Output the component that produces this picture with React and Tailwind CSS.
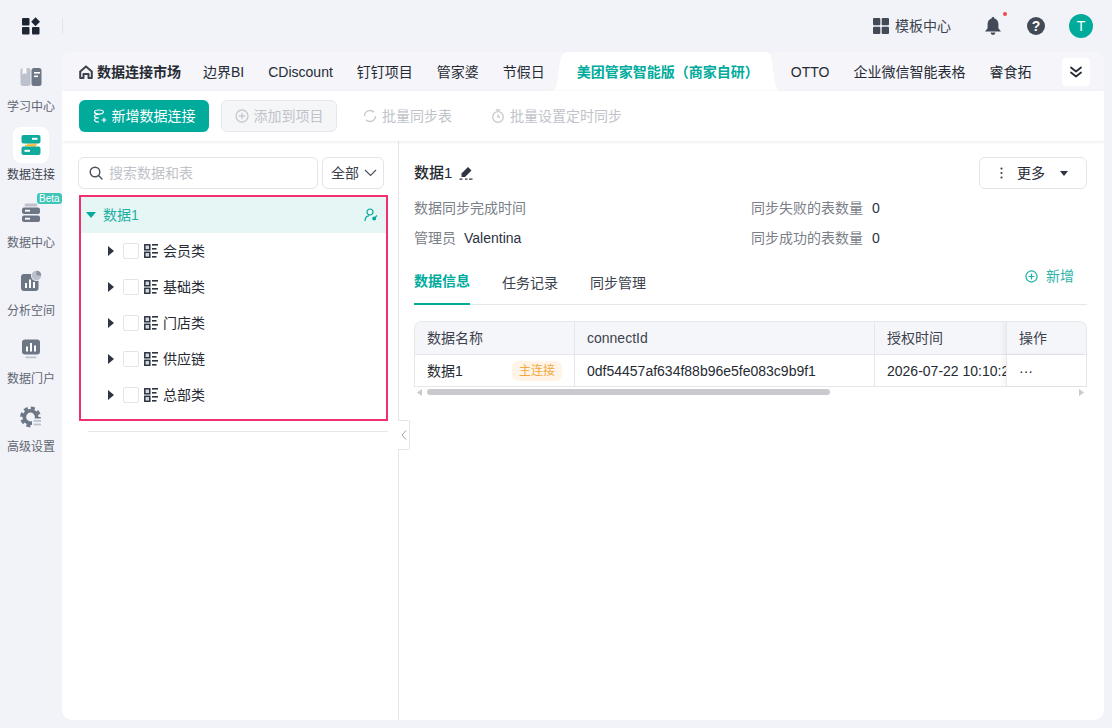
import React from "react";

const Logo = () => (
  <svg width="18" height="18" viewBox="0 0 18 18" fill="#1f2633">
    <rect x="0" y="1" width="7.5" height="7.5" rx="1" />
    <path d="M13.5 0.2 L18 4.7 L13.5 9.2 L9.2 4.7 Z" />
    <rect x="0" y="10" width="7.5" height="7.5" rx="1" />
    <rect x="10" y="10" width="7.5" height="7.5" rx="1" />
  </svg>
);

const LearnIcon = () => (
  <svg width="22" height="20" viewBox="0 0 22 20">
    <rect x="0.500" y="1" width="10" height="18" rx="2.500" fill="#bcc2cd" />
    <path d="M2.500 1h4v6.500l-2-1.500-2 1.500z" fill="#fff" opacity=".9" />
    <rect x="11.500" y="1" width="10" height="18" rx="2.500" fill="#6d7684" />
    <rect x="14" y="5" width="6" height="1.600" fill="#fff" />
    <rect x="14" y="8.500" width="4" height="1.600" fill="#fff" />
  </svg>
);

const ConnectIcon = () => (
  <svg width="20" height="20" viewBox="0 0 20 20">
    <rect x="6" y="8.500" width="10" height="1.300" fill="#f7b733" />
    <rect x="4" y="10" width="11" height="1.500" fill="#f7b733" />
    <rect x="0.500" y="0" width="19" height="8.500" rx="2" fill="#11ab9e" />
    <rect x="0.500" y="11.500" width="19" height="8.500" rx="2" fill="#11ab9e" />
    <rect x="11" y="2.800" width="5.500" height="2" fill="#fff" />
    <rect x="3.500" y="14.800" width="5.500" height="2" fill="#fff" />
  </svg>
);

const CenterIcon = () => (
  <svg width="20" height="20" viewBox="0 0 20 20">
    <rect x="3.500" y="0.500" width="13" height="3" rx="1.500" fill="#bcc2cd" />
    <rect x="1" y="4.500" width="18" height="6.500" rx="2" fill="#6d7684" />
    <rect x="1" y="12.500" width="18" height="6.500" rx="2" fill="#6d7684" />
    <rect x="4" y="6.800" width="5" height="1.800" fill="#fff" />
    <rect x="4" y="14.800" width="5" height="1.800" fill="#fff" />
  </svg>
);

const SpaceIcon = () => (
  <svg width="22" height="22" viewBox="0 0 22 22">
    <rect x="1" y="4" width="17.500" height="17" rx="3" fill="#6d7684" />
    <rect x="5" y="13" width="2" height="5" fill="#fff" />
    <rect x="9" y="9.500" width="2" height="8.500" fill="#fff" />
    <rect x="13" y="12" width="2" height="6" fill="#fff" />
    <circle cx="16.500" cy="5.500" r="5.500" fill="#f2f3f9" />
    <circle cx="16.500" cy="5.500" r="4.800" fill="#bcc2cd" />
    <path d="M16.500 5.500V.7a4.800 4.800 0 0 1 4.800 4.800z" fill="#8b93a1" />
  </svg>
);

const PortalIcon = () => (
  <svg width="20" height="20" viewBox="0 0 20 20">
    <rect x="1" y="0.500" width="18" height="15" rx="3" fill="#6d7684" />
    <rect x="5" y="7.500" width="2" height="5" fill="#fff" />
    <rect x="9" y="4" width="2" height="8.500" fill="#fff" />
    <rect x="13" y="6.500" width="2" height="6" fill="#fff" />
    <rect x="4.500" y="17.500" width="11" height="1.800" rx=".9" fill="#bcc2cd" />
  </svg>
);

const GearIcon = () => (
  <svg width="22" height="22" viewBox="0 0 22 22" fill="none">
    <circle cx="10.500" cy="11" r="6.200" stroke="#6d7684" strokeWidth="3.600" />
    <circle cx="10.500" cy="11" r="9" stroke="#6d7684" strokeWidth="2.800" strokeDasharray="4.100 2.970" />
    <rect x="12" y="12.500" width="10" height="9.500" fill="#f2f3f9" />
    <rect x="13.500" y="14" width="7.500" height="1.800" fill="#bcc2cd" />
    <rect x="13.500" y="17.600" width="7.500" height="1.800" fill="#bcc2cd" />
  </svg>
);

const NavItem = ({ icon, label, active, badge }) => (
  <div className="relative flex h-[68px] w-[62px] flex-col items-center">
    <div className={`flex h-9 w-9 items-center justify-center rounded-lg ${active ? "bg-white" : ""}`}>{icon}</div>
    <span className={`mt-[2px] text-xs leading-[20px] ${active ? "text-[#3c424d]" : "text-[#5f6671]"}`}>{label}</span>
    {badge && (
      <span className="absolute left-[37px] top-[-2px] rounded-[3px] bg-[#3fc4b8] px-[2px] text-[10px] leading-[11px] text-white">
        {badge}
      </span>
    )}
  </div>
);

const TabCurveLeft = () => (
  <svg width="18" height="39" viewBox="0 0 18 39" className="ml-[5px] shrink-0" fill="#fff">
    <path d="M0 39C4 39 6.500 36 7.200 31L10 10C10.800 4 13 0.500 18 0V39Z" />
  </svg>
);
const TabCurveRight = () => (
  <svg width="15" height="39" viewBox="0 0 15 39" className="shrink-0" fill="#fff">
    <path d="M15 39C11 39 9 36 8 31L5 10C4.300 4 3 0.500 0 0V39Z" />
  </svg>
);

const PlusCircle = ({ color, size = 14 }) => (
  <svg width={size} height={size} viewBox="0 0 14 14" fill="none" stroke={color} strokeWidth="1.300" strokeLinecap="round">
    <circle cx="7" cy="7" r="6" />
    <path d="M4.300 7h5.400M7 4.300v5.400" />
  </svg>
);

const TreeGlyph = () => (
  <svg width="14" height="14" viewBox="0 0 14 14" className="shrink-0">
    <rect x="0.800" y="0.800" width="5" height="5" fill="#d5d8de" stroke="#2b3240" strokeWidth="1.500" />
    <rect x="0.800" y="8.300" width="5" height="5" fill="#d5d8de" stroke="#2b3240" strokeWidth="1.500" />
    <rect x="8" y="0" width="6" height="1.600" fill="#2b3240" />
    <rect x="8" y="4" width="4.500" height="1.600" fill="#2b3240" />
    <rect x="8" y="8" width="6" height="1.600" fill="#2b3240" />
    <rect x="8" y="12" width="4.500" height="1.600" fill="#2b3240" />
  </svg>
);

const TreeRow = ({ label }) => (
  <div className="flex h-9 items-center pl-[27px]">
    <svg width="6" height="10" viewBox="0 0 6 10" fill="#2f3642"><path d="M0 0l6 5-6 5z" /></svg>
    <span className="ml-[9px] h-4 w-4 rounded-[2px] border border-[#e2e4ea] bg-white" />
    <span className="ml-[5px]"><TreeGlyph /></span>
    <span className="ml-[5px] text-sm leading-5 text-[#262b33]">{label}</span>
  </div>
);

const InfoRow = ({ label, value, ml }) => (
  <div className="flex h-[30px] items-center text-sm">
    <span className="text-[#7b8088]">{label}</span>
    <span className={`${ml} text-[#2b3240]`}>{value}</span>
  </div>
);

export default function App() {
  return (
    <div className="flex h-[728px] w-[1112px] flex-col overflow-hidden bg-[#f2f3f9] font-['Liberation_Sans','Noto_Sans_CJK_SC',sans-serif] text-sm text-[#262b33]">
      <header className="flex h-[52px] shrink-0 items-center">
        <div className="ml-[22px]"><Logo /></div>
        <div className="ml-[22px] h-4 w-px bg-[#e3e5ec]" />
        <div className="ml-auto flex items-center">
          <svg width="16" height="16" viewBox="0 0 16 16" fill="#434a57">
            <rect x="0" y="0" width="7.300" height="7.300" rx="1" />
            <rect x="8.700" y="0" width="7.300" height="7.300" rx="1" />
            <rect x="0" y="8.700" width="7.300" height="7.300" rx="1" />
            <rect x="8.700" y="8.700" width="7.300" height="7.300" rx="1" />
          </svg>
          <span className="ml-[6px] text-sm text-[#3c424d]">模板中心</span>
          <span className="relative ml-[34px] flex">
            <svg width="16" height="18" viewBox="0 0 16 18" fill="#434a57">
              <path d="M8 0a1.400 1.400 0 0 1 1.400 1.500C12 2.200 13.400 4.400 13.400 7v4.300L16 14.600H0l2.600-3.300V7c0-2.600 1.400-4.800 4-5.500A1.400 1.400 0 0 1 8 0z" />
              <path d="M5.600 15.600h4.800a2.400 2.400 0 0 1-4.800 0z" />
            </svg>
            <span className="absolute left-[18px] top-[-5px] h-1 w-1 rounded-full bg-[#ef4b4b]" />
          </span>
          <span className="ml-[26px] flex h-[18px] w-[18px] items-center justify-center rounded-full bg-[#434a57] text-sm font-bold leading-none text-white">?</span>
          <span className="ml-[24px] mr-[19px] flex h-6 w-6 items-center justify-center rounded-full bg-[#00ab9c] text-sm text-white">T</span>
        </div>
      </header>

      <div className="flex min-h-0 flex-1">
        <aside className="flex w-[62px] shrink-0 flex-col pt-[7px]">
          <NavItem icon={<LearnIcon />} label="学习中心" />
          <NavItem icon={<ConnectIcon />} label="数据连接" active />
          <NavItem icon={<CenterIcon />} label="数据中心" badge="Beta" />
          <NavItem icon={<SpaceIcon />} label="分析空间" />
          <NavItem icon={<PortalIcon />} label="数据门户" />
          <NavItem icon={<GearIcon />} label="高级设置" />
        </aside>

        <main className="mb-2 mr-2 flex min-w-0 flex-1 flex-col overflow-hidden rounded-[10px] bg-white">
          <nav className="flex h-[39px] shrink-0 items-center bg-[#f5f5fa] pl-[17px] text-sm">
            <svg width="14" height="14" viewBox="0 0 14 14" fill="none" stroke="#3c424d" strokeWidth="2" strokeLinejoin="round">
              <path d="M1.200 6.500L7 1.400l5.800 5.100V13H9.500V9h-5v4H1.200z" />
            </svg>
            <span className="ml-[4px] font-bold text-[#262b33]">数据连接市场</span>
            <span className="ml-[22px]">边界BI</span>
            <span className="ml-[24px]">CDiscount</span>
            <span className="ml-[24px]">钉钉项目</span>
            <span className="ml-[24px]">管家婆</span>
            <span className="ml-[24px]">节假日</span>
            <TabCurveLeft />
            <span className="flex h-full items-center bg-white pl-[9px] pr-[8px] text-sm font-bold text-[#00ab9c]">
              美团管家智能版（商家自研）
            </span>
            <TabCurveRight />
            <span className="ml-[9px]">OTTO</span>
            <span className="ml-[24px]">企业微信智能表格</span>
            <span className="ml-[24px]">睿食拓</span>
            <span className="ml-[31px] flex h-7 w-7 items-center justify-center rounded-[3px] bg-white">
              <svg width="14" height="12" viewBox="0 0 14 12" fill="none" stroke="#262b33" strokeWidth="1.800" strokeLinecap="round" strokeLinejoin="round">
                <path d="M2 1.500l5 4 5-4M2 6.500l5 4 5-4" />
              </svg>
            </span>
          </nav>

          <div className="relative z-10 flex h-[50px] shrink-0 items-center bg-white pl-[17px] shadow-[0_1px_4px_rgba(0,0,0,0.08)]">
            <button className="flex h-8 w-[130px] items-center justify-center rounded-[6px] bg-[#00ab9c] text-sm text-white">
              <svg width="14" height="14" viewBox="0 0 14 14" fill="none" stroke="#fff" strokeWidth="1.200" strokeLinecap="round" className="mr-[5px]">
                <ellipse cx="6" cy="3" rx="4.500" ry="2" />
                <path d="M1.500 3c0 1 1 2 4.500 2.500M1.500 7c0 1.500 2 2 4 2M1.500 7c0-1 2-1.500 4.500-1.500M1.500 11c0 1 2 2 4 2M1.500 11c0-1 2-2 4-2M11 9v4M9 11h4" />
              </svg>
              新增数据连接
            </button>
            <button className="ml-3 flex h-8 w-[116px] items-center justify-center rounded-[6px] border border-[#e6e7eb] bg-[#f5f6f8] text-sm text-[#c0c3c9]">
              <span className="mr-[5px] flex"><PlusCircle color="#c6c9ce" /></span>
              添加到项目
            </button>
            <span className="ml-[26px] flex items-center text-sm text-[#c0c3c9]">
              <svg width="14" height="14" viewBox="0 0 14 14" fill="none" stroke="#c6c9ce" strokeWidth="1.300" className="mr-[5px]">
                <path d="M1.500 7a5.500 5.500 0 0 1 9.500-3.700M12.500 7A5.500 5.500 0 0 1 3 10.700" />
              </svg>
              批量同步表
            </span>
            <span className="ml-[39px] flex items-center text-sm text-[#c0c3c9]">
              <svg width="14" height="14" viewBox="0 0 14 14" fill="none" stroke="#c6c9ce" strokeWidth="1.300" className="mr-[5px]">
                <circle cx="7" cy="8" r="5.300" />
                <path d="M5 1h4M7 5.200V8h2" />
              </svg>
              批量设置定时同步
            </span>
          </div>

          <div className="relative flex min-h-0 flex-1">
            <section className="w-[337px] shrink-0 border-r border-[#e6e7eb] pl-[16px] pr-[10px] pt-4">
              <div className="flex gap-1">
                <div className="flex h-8 w-[240px] items-center rounded-[6px] border border-[#e2e4ea] pl-[10px]">
                  <svg width="14" height="14" viewBox="0 0 14 14" fill="none" stroke="#4b515c" strokeWidth="1.400" strokeLinecap="round">
                    <circle cx="6" cy="6" r="4.800" />
                    <path d="M9.600 9.600L13 13" />
                  </svg>
                  <span className="ml-[6px] text-sm text-[#bfc2c8]">搜索数据和表</span>
                </div>
                <div className="flex h-8 w-[62px] items-center justify-between rounded-[6px] border border-[#e2e4ea] pl-[8px] pr-[6px]">
                  <span className="text-sm text-[#3c424d]">全部</span>
                  <svg width="13" height="8" viewBox="0 0 13 8" fill="none" stroke="#4b515c" strokeWidth="1.200"><path d="M1 1l5.500 5.400L12 1" /></svg>
                </div>
              </div>

              <div className="ml-[1px] mt-[6px] w-[309px] border-2 border-[#f0306f] pb-[6px]">
                <div className="flex h-9 items-center bg-[#e6f6f4] pl-[5px] pr-[8px]">
                  <svg width="10" height="6" viewBox="0 0 10 6" fill="#00ab9c"><path d="M0 0h10L5 6z" /></svg>
                  <span className="ml-[7px] text-sm text-[#1bb0a3]">数据1</span>
                  <svg width="14" height="14" viewBox="0 0 14 14" fill="none" stroke="#00ab9c" strokeWidth="1.200" className="ml-auto">
                    <circle cx="6" cy="4" r="3" />
                    <path d="M1 13c0-3 1.600-5 4.200-5.400" />
                    <circle cx="10.200" cy="10.500" r="1.400" fill="#00ab9c" />
                    <path d="M11.500 9l1.500-1.500" />
                  </svg>
                </div>
                <TreeRow label="会员类" />
                <TreeRow label="基础类" />
                <TreeRow label="门店类" />
                <TreeRow label="供应链" />
                <TreeRow label="总部类" />
              </div>
              <div className="ml-[10px] mt-[10px] h-px w-[300px] bg-[#e6e7eb]" />
            </section>

            <button className="absolute left-[336px] top-[279px] flex h-[30px] w-3 items-center justify-center rounded-r-[2px] border border-l-0 border-[#e2e4ea] bg-white">
              <svg width="6" height="10" viewBox="0 0 6 10" fill="none" stroke="#9a9fa8" strokeWidth="1"><path d="M5 .5L1 5l4 4.500" /></svg>
            </button>

            <section className="min-w-0 flex-1 pl-[15px] pr-[17px] pt-4">
              <div className="flex h-8 items-center">
                <span className="text-[15px] font-medium text-[#262b33]">数据1</span>
                <svg width="14" height="14" viewBox="0 0 14 14" fill="#2f3642" className="ml-[7px]">
                  <path d="M9 1l3.500 3.500L6 11H2.500V7.500z" />
                  <path d="M0.500 12.400h3v1.300h-3zM6 12.400h2.400v1.300H6zM10 12.400h3.500v1.300H10z" />
                </svg>
                <button className="ml-auto flex h-8 w-[108px] items-center rounded-[6px] border border-[#e2e4ea] bg-white pl-[20px] text-sm text-[#262b33]">
                  <svg width="3" height="12" viewBox="0 0 3 12" fill="#3c424d">
                    <circle cx="1.500" cy="1.500" r="1.100" />
                    <circle cx="1.500" cy="6" r="1.100" />
                    <circle cx="1.500" cy="10.500" r="1.100" />
                  </svg>
                  <span className="ml-[14px]">更多</span>
                  <svg width="8" height="5" viewBox="0 0 8 5" fill="#2f3642" className="ml-[15px]"><path d="M0 0h8L4 5z" /></svg>
                </button>
              </div>

              <div className="mt-1 grid grid-cols-[337px_1fr]">
                <InfoRow label="数据同步完成时间" value="" ml="" />
                <InfoRow label="同步失败的表数量" value="0" ml="ml-[9px]" />
                <InfoRow label="管理员" value="Valentina" ml="ml-[8px]" />
                <InfoRow label="同步成功的表数量" value="0" ml="ml-[9px]" />
              </div>

              <div className="mt-[8px] flex h-[44px] border-b border-[#e6e7eb]">
                <span className="flex h-[44px] items-center border-b-2 border-[#00ab9c] pb-[2px] text-sm font-bold text-[#00ab9c]">数据信息</span>
                <span className="ml-8 flex h-[43px] items-center text-sm text-[#3c424d]">任务记录</span>
                <span className="ml-8 flex h-[43px] items-center text-sm text-[#3c424d]">同步管理</span>
                <span className="ml-auto mr-[13px] mt-[5px] flex h-5 items-center text-sm text-[#2db3a7]">
                  <span className="mr-2 flex"><PlusCircle color="#1bb0a3" size={13} /></span>
                  新增
                </span>
              </div>

              <div className="mt-4 overflow-hidden rounded-t-[8px] border-x border-t border-[#e6e7eb]">
                <div className="flex h-[33px] items-center border-b border-[#e6e7eb] bg-[#f5f6f9] text-sm text-[#3c424d]">
                  <span className="flex h-full w-[160px] shrink-0 items-center border-r border-[#e6e7eb] pl-3">数据名称</span>
                  <span className="flex h-full w-[300px] shrink-0 items-center border-r border-[#e6e7eb] pl-3">connectId</span>
                  <span className="flex h-full w-[131px] shrink-0 items-center pl-3">授权时间</span>
                  <span className="flex h-full flex-1 items-center border-l border-[#e6e7eb] pl-3 shadow-[-3px_0_5px_rgba(0,0,0,0.05)]">操作</span>
                </div>
                <div className="flex h-[32px] items-center border-b border-[#e6e7eb] text-sm text-[#262b33]">
                  <span className="flex h-full w-[160px] shrink-0 items-center border-r border-[#e6e7eb] pl-3 pr-3">
                    数据1
                    <span className="ml-auto rounded-[6px] bg-[#fff4e6] px-[7px] text-xs leading-[20px] text-[#f5a63c]">主连接</span>
                  </span>
                  <span className="flex h-full w-[300px] shrink-0 items-center overflow-hidden whitespace-nowrap border-r border-[#e6e7eb] pl-3">0df54457af634f88b96e5fe083c9b9f1</span>
                  <span className="flex h-full w-[131px] shrink-0 items-center overflow-hidden whitespace-nowrap pl-3">2026-07-22 10:10:25</span>
                  <span className="flex h-full flex-1 items-center border-l border-[#e6e7eb] bg-white pl-3 shadow-[-3px_0_5px_rgba(0,0,0,0.05)]">···</span>
                </div>
              </div>
              <div className="flex h-[10px] items-center px-[3px]">
                <svg width="5" height="7" viewBox="0 0 5 7" fill="#c8cacd"><path d="M5 0v7L0 3.500z" /></svg>
                <div className="ml-[5px] h-[6px] w-[403px] rounded-full bg-[#c8cacd]" />
                <svg width="5" height="7" viewBox="0 0 5 7" fill="#c8cacd" className="ml-auto"><path d="M0 0v7l5-3.500z" /></svg>
              </div>
            </section>
          </div>
        </main>
      </div>
    </div>
  );
}
